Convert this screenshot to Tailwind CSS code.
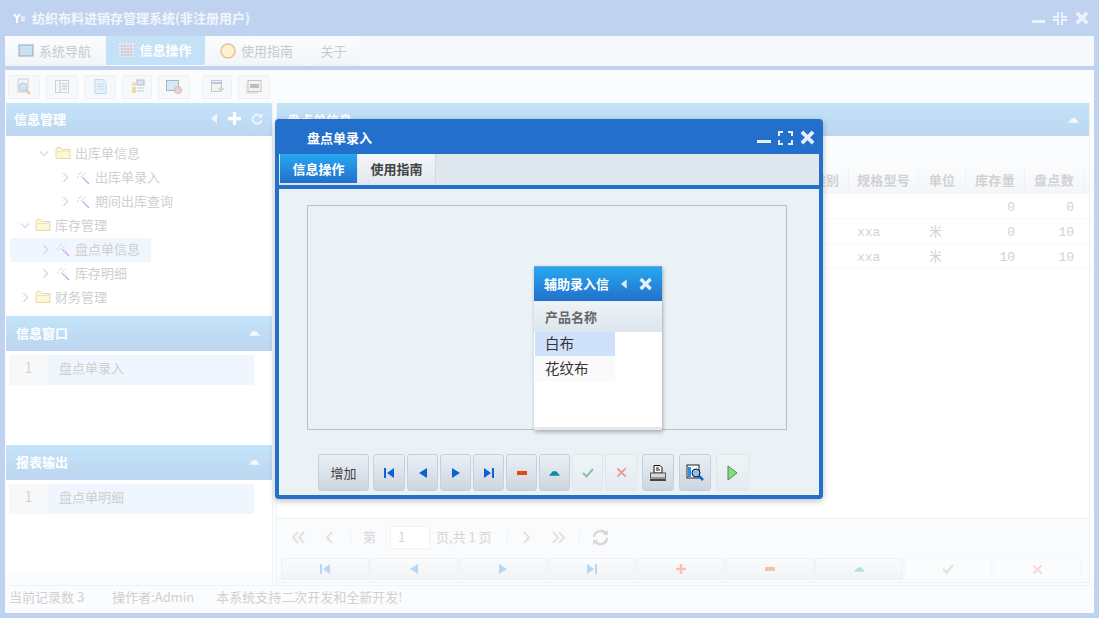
<!DOCTYPE html>
<html lang="zh-CN">
<head>
    <meta charset="UTF-8">
    <title>纺织布料进销存管理系统</title>
    <script src="https://cdn.jsdelivr.net/npm/@tailwindcss/browser@4"></script>
</head>
<body class="w-[1099px] h-[618px] overflow-hidden bg-[#bfd3f0] font-['Noto_Sans_CJK_SC','Liberation_Sans',sans-serif] text-[13px]">
<svg class="hidden">
    <symbol id="folder" viewBox="0 0 16 14"><path d="M1 3.5V12.5H15V3.5H7L5.5 1.5H2Z" fill="#fdf6d8" stroke="#e6d9a8"/><path d="M1.5 5.5H14.5" stroke="#efe6c0"/></symbol>
    <symbol id="wand" viewBox="0 0 16 16"><path d="M7 8L14 15" stroke="#d9a6ee" stroke-width="1.600"/><path d="M3 5L7 1M5 8L10 3M1 8L3 7M8 11L11 8" stroke="#dedede" stroke-width="1.500" stroke-dasharray="2 1"/></symbol>
    <symbol id="right" viewBox="0 0 8 12"><path d="M1.5 1L6.5 6L1.5 11" fill="none" stroke="#d4d4f0" stroke-width="1.5"/></symbol>
    <symbol id="down" viewBox="0 0 12 8"><path d="M1 1.5L6 6.5L11 1.5" fill="none" stroke="#d4d4f0" stroke-width="1.5"/></symbol>
    <symbol id="first" viewBox="0 0 12 10"><path d="M1 0H3V10H1ZM11 0V10L4 5Z"/></symbol>
    <symbol id="prev" viewBox="0 0 12 10"><path d="M10 0V10L2 5Z"/></symbol>
    <symbol id="next" viewBox="0 0 12 10"><path d="M2 0V10L10 5Z"/></symbol>
    <symbol id="last" viewBox="0 0 12 10"><path d="M9 0H11V10H9ZM1 0V10L8 5Z"/></symbol>
    <symbol id="caret" viewBox="0 0 12 6"><path d="M0 6L4 1H8L12 6Z"/></symbol>
    <symbol id="check" viewBox="0 0 12 10"><path d="M1 5L4.5 8.5L11 1" fill="none" stroke="currentColor" stroke-width="2"/></symbol>
    <symbol id="cross" viewBox="0 0 12 12"><path d="M1.5 1.5L10.5 10.5M10.5 1.5L1.5 10.5" fill="none" stroke="currentColor" stroke-width="2"/></symbol>
    <symbol id="xbold" viewBox="0 0 12 12"><path d="M1.5 1.5L10.5 10.5M10.5 1.5L1.5 10.5" fill="none" stroke="currentColor" stroke-width="3"/></symbol>
</svg>

<div class="flex flex-col h-full pl-[5px] pr-[5px] pb-[5px]">
    <!-- title bar -->
    <div class="h-[36px] shrink-0 flex items-center pl-[8px] pr-[5px] text-white">
        <svg class="w-[13px] h-[12px]" viewBox="0 0 13 12"><path d="M1 2L4 6L7 2M4 6V11" fill="none" stroke="#fff" stroke-width="2"/><rect x="8" y="4" width="4" height="6" fill="#dfe9f7"/></svg>
        <span class="ml-[6px] font-bold text-[13px] text-[#f2f6fc]">纺织布料进销存管理系统(非注册用户)</span>
        <div class="ml-auto flex items-center gap-[6px] text-[#eef3fb]">
            <svg class="w-[15px] h-[15px]" viewBox="0 0 15 15"><rect x="1" y="9" width="13" height="3" fill="currentColor"/></svg>
            <svg class="w-[16px] h-[15px]" viewBox="0 0 16 15"><path d="M6 1V6H1M10 1V6H15M6 14V9H1M10 14V9H15" fill="none" stroke="currentColor" stroke-width="2"/></svg>
            <svg class="w-[14px] h-[14px] ml-[1px]" viewBox="0 0 12 12"><use href="#xbold"/></svg>
        </div>
    </div>

    <div class="flex-1 min-h-0 flex flex-col bg-[#fbfcfe]">
        <!-- main tabs -->
        <div class="h-[30px] shrink-0 flex gap-[2px] bg-[#f5f9fc] text-[13px] text-[#c9c9c9]">
            <div class="w-[99px] pb-[1px] flex items-center justify-center gap-[5px] bg-gradient-to-b from-[#fbfdfe] to-[#f1f5f8]">
                <svg class="w-[16px] h-[13px]" viewBox="0 0 16 13"><rect x="1" y="1" width="14" height="11" fill="#c8e2f0" stroke="#9aa8b4"/></svg>系统导航
            </div>
            <div class="w-[99px] pb-[1px] flex items-center justify-center gap-[5px] bg-[#c4e1f7] text-white font-bold border-b border-[#f0f8fd]">
                <svg class="w-[15px] h-[14px]" viewBox="0 0 15 14"><path d="M0 0H15V14H0Z" fill="#eef2f6"/><path d="M3 0V14M6 0V14M9 0V14M12 0V14M0 3H15M0 6H15M0 9H15M0 12H15" stroke="#b8b8c4" stroke-width=".7"/></svg>信息操作
            </div>
            <div class="w-[99px] pb-[1px] flex items-center justify-center gap-[5px] bg-gradient-to-b from-[#fbfdfe] to-[#f1f5f8]">
                <svg class="w-[16px] h-[16px]" viewBox="0 0 16 16"><circle cx="8" cy="8" r="7" fill="#fdf1d2" stroke="#e0c690" stroke-width="1.4"/></svg>使用指南
            </div>
            <div class="w-[51px] pb-[1px] flex items-center justify-center bg-gradient-to-b from-[#fbfdfe] to-[#f1f5f8]">关于</div>
        </div>
        <div class="h-[4px] shrink-0 bg-[#bfd3f0]"></div>

        <!-- toolbar -->
        <div class="h-[33px] shrink-0 flex items-center pl-[3px] bg-[#fbfcfe]">
            <div class="w-[32px] h-[24px] flex items-center justify-center rounded-[2px] border border-[#eef0f2] bg-[#f7f8f9]"><svg class="w-[16px] h-[18px]" viewBox="0 0 16 18"><rect x="2" y="1" width="10" height="13" fill="#f4f4f4" stroke="#cfcfcf"/><circle cx="7" cy="9" r="4" fill="#cfe6f7" stroke="#b9c9d4"/><path d="M10 12L14 16" stroke="#eac3a6" stroke-width="2"/></svg></div>
            <div class="ml-[6px] w-[32px] h-[24px] flex items-center justify-center rounded-[2px] border border-[#eef0f2] bg-[#f7f8f9]"><svg class="w-[14px] h-[13px]" viewBox="0 0 14 13"><rect x=".5" y=".5" width="13" height="12" fill="#f4f6f7" stroke="#cdd2d6"/><path d="M5 1V12M7 4H12M7 6.500H12M7 9H12" stroke="#c4c9cd"/></svg></div>
            <div class="ml-[6px] w-[32px] h-[24px] flex items-center justify-center rounded-[2px] border border-[#eef0f2] bg-[#f7f8f9]"><svg class="w-[13px] h-[15px]" viewBox="0 0 13 15"><path d="M1 .5H9L12 3.500V14.500H1Z" fill="#e6f3fb" stroke="#bcdcf0"/><path d="M3 5H10M3 7.500H10M3 10H10" stroke="#bcdcf0"/></svg></div>
            <div class="ml-[6px] w-[30px] h-[24px] flex items-center justify-center rounded-[2px] border border-[#eef0f2] bg-[#f7f8f9]"><svg class="w-[15px] h-[15px]" viewBox="0 0 15 15"><circle cx="4" cy="5" r="2" fill="#f2dcb4"/><path d="M2 8H6V14H2Z" fill="#efd9a6"/><rect x="7" y="1" width="7" height="5" fill="#dbe3f0" stroke="#b8bccb"/><path d="M7 9H14M7 12H14" stroke="#c4c9cd"/></svg></div>
            <div class="ml-[6px] w-[32px] h-[24px] flex items-center justify-center rounded-[2px] border border-[#eef0f2] bg-[#f7f8f9]"><svg class="w-[16px] h-[14px]" viewBox="0 0 16 14"><rect x=".5" y=".5" width="12" height="10" fill="#d5e8f5" stroke="#aeb6bd"/><circle cx="12" cy="10" r="3.500" fill="#e7cfe2" stroke="#d2bfa0"/></svg></div>
            <div class="ml-[12px] w-[30px] h-[24px] flex items-center justify-center rounded-[2px] border border-[#eef0f2] bg-[#f7f8f9]"><svg class="w-[13px] h-[13px]" viewBox="0 0 13 13"><rect x=".5" y=".5" width="10" height="11" fill="#f2f3f4" stroke="#c6c9cc"/><path d="M1 3H10" stroke="#b4c7e0" stroke-width="2"/><path d="M7 9H13M10 6V12" stroke="#bfe0bd" stroke-width="1.500"/></svg></div>
            <div class="ml-[6px] w-[32px] h-[24px] flex items-center justify-center rounded-[2px] border border-[#eef0f2] bg-[#f7f8f9]"><svg class="w-[16px] h-[14px]" viewBox="0 0 16 14"><rect x="2" y=".5" width="13" height="11" fill="#f2f2f2" stroke="#c4c4c4"/><rect x="4" y="4" width="9" height="4" fill="#bdbdbd"/><path d="M0 3V13H12" fill="none" stroke="#cfcfcf"/></svg></div>
        </div>

        <div class="flex-1 min-h-0 flex pl-[1px] pr-[2px]">
            <!-- left panel -->
            <div class="w-[267px] shrink-0 flex flex-col border-r border-[#f0f3f6]">
                <div class="h-[33px] shrink-0 pb-[2px] flex items-center pl-[8px] pr-[9px] bg-gradient-to-b from-[#c2e4f9] to-[#bdd5f0] text-white font-bold">
                    信息管理
                    <div class="ml-auto flex items-center text-white">
                        <svg class="w-[6px] h-[11px] fill-[#eef5fc]" viewBox="0 0 6 10"><path d="M6 0V10L0 5Z"/></svg>
                        <svg class="ml-[11px] w-[13px] h-[13px]" viewBox="0 0 12 12"><path d="M6 0V12M0 6H12" stroke="#fff" stroke-width="3"/></svg>
                        <svg class="ml-[10px] w-[12px] h-[12px]" viewBox="0 0 12 12"><path d="M10 4A4.500 4.500 0 1 0 10.500 7.500" fill="none" stroke="#eef5fc" stroke-width="2"/><path d="M7.500 4.500H11.500V.5Z" fill="#eef5fc"/></svg>
                    </div>
                </div>
                <!-- tree -->
                <div class="h-[177px] shrink-0 pt-[6px] pl-[4px] bg-white text-[#cfcfcf] leading-[24px]">
                    <div class="h-[24px] pb-[2px] flex items-center pl-[29px]"><svg class="w-[10px] h-[7px]"><use href="#down"/></svg><svg class="ml-[6px] w-[16px] h-[14px]"><use href="#folder"/></svg><span class="ml-[4px]">出库单信息</span></div>
                    <div class="h-[24px] pb-[2px] flex items-center pl-[52px]"><svg class="w-[7px] h-[11px]"><use href="#right"/></svg><svg class="ml-[7px] w-[15px] h-[15px]"><use href="#wand"/></svg><span class="ml-[4px]">出库单录入</span></div>
                    <div class="h-[24px] pb-[2px] flex items-center pl-[52px]"><svg class="w-[7px] h-[11px]"><use href="#right"/></svg><svg class="ml-[7px] w-[15px] h-[15px]"><use href="#wand"/></svg><span class="ml-[4px]">期间出库查询</span></div>
                    <div class="h-[24px] pb-[2px] flex items-center pl-[10px]"><svg class="w-[10px] h-[7px]"><use href="#down"/></svg><svg class="ml-[5px] w-[16px] h-[14px]"><use href="#folder"/></svg><span class="ml-[4px]">库存管理</span></div>
                    <div class="h-[24px] pb-[2px] w-[141px] flex items-center pl-[32px] bg-[#f0f6fe]"><svg class="w-[7px] h-[11px]"><use href="#right"/></svg><svg class="ml-[7px] w-[15px] h-[15px]"><use href="#wand"/></svg><span class="ml-[4px]">盘点单信息</span></div>
                    <div class="h-[24px] pb-[2px] flex items-center pl-[32px]"><svg class="w-[7px] h-[11px]"><use href="#right"/></svg><svg class="ml-[7px] w-[15px] h-[15px]"><use href="#wand"/></svg><span class="ml-[4px]">库存明细</span></div>
                    <div class="h-[24px] pb-[2px] flex items-center pl-[12px]"><svg class="w-[7px] h-[11px]"><use href="#right"/></svg><svg class="ml-[6px] w-[16px] h-[14px]"><use href="#folder"/></svg><span class="ml-[4px]">财务管理</span></div>
                </div>
                <div class="h-[3px] shrink-0 bg-[#fbfcfe]"></div>
                <div class="h-[35px] shrink-0 pb-[2px] flex items-center pl-[10px] pr-[12px] bg-gradient-to-b from-[#c2e4f9] to-[#bdd5f0] text-white font-bold">
                    信息窗口
                    <svg class="ml-auto w-[11px] h-[6px] fill-[#f4f8fd]"><use href="#caret"/></svg>
                </div>
                <div class="h-[94px] shrink-0 pt-[4px] pl-[3px] bg-white">
                    <div class="w-[245px] h-[30px] flex items-center text-[#cfcfcf]">
                        <span class="w-[39px] h-full pb-[5px] flex items-center justify-center bg-[#f7f8fa] text-[#d4d4d4] text-[14px]">1</span>
                        <span class="flex-1 h-full pb-[5px] flex items-center pl-[11px] bg-[#f0f6fe]">盘点单录入</span>
                    </div>
                </div>
                <div class="h-[35px] shrink-0 pb-[2px] flex items-center pl-[10px] pr-[12px] bg-gradient-to-b from-[#c2e4f9] to-[#bdd5f0] text-white font-bold">
                    报表输出
                    <svg class="ml-auto w-[11px] h-[6px] fill-[#f4f8fd]"><use href="#caret"/></svg>
                </div>
                <div class="h-[90px] shrink-0 pt-[4px] pl-[3px] bg-white">
                    <div class="w-[245px] h-[30px] flex items-center text-[#cfcfcf]">
                        <span class="w-[39px] h-full pb-[5px] flex items-center justify-center bg-[#f7f8fa] text-[#d4d4d4] text-[14px]">1</span>
                        <span class="flex-1 h-full pb-[5px] flex items-center pl-[11px] bg-[#f0f6fe]">盘点单明细</span>
                    </div>
                </div>
            </div>

            <!-- right panel -->
            <div class="ml-[3px] w-[814px] flex flex-col border-x border-[#f0f3f6]">
                <div class="h-[33px] shrink-0 flex items-center pl-[10px] pr-[10px] bg-gradient-to-b from-[#c2e4f9] to-[#bdd5f0] text-white font-bold">
                    盘点单信息
                    <svg class="ml-auto w-[11px] h-[6px] fill-[#f4f8fd]"><use href="#caret"/></svg>
                </div>
                <div class="h-[29px] shrink-0 bg-[#fbfcfe]"></div>
                <!-- table -->
                <div class="h-[353px] shrink-0 bg-white">
                    <div class="h-[29px] flex justify-end items-center bg-gradient-to-b from-[#fbfcfd] to-[#f3f6f9] font-bold text-[#d2d2d2]">
                        <span class="w-[40px] pr-[9px] text-right">类别</span>
                        <span class="w-[70px] h-full flex items-center justify-center border-l border-[#f0f3f6] tracking-[0.3px]">规格型号</span>
                        <span class="w-[47px] h-full flex items-center justify-center border-l border-[#f0f3f6] tracking-[0.3px]">单位</span>
                        <span class="w-[59px] h-full flex items-center justify-center border-l border-[#f0f3f6] tracking-[0.3px]">库存量</span>
                        <span class="w-[59px] h-full flex items-center justify-center border-l border-[#f0f3f6] tracking-[0.3px]">盘点数</span>
                        <span class="w-[6px] h-full border-l border-[#f0f3f6]"></span>
                    </div>
                    <div class="h-[25px] pt-[4px] flex justify-end items-center border-b border-[#f8f9fb] font-['Liberation_Mono',monospace] text-[#d2d2d2]">
                        <span class="w-[70px] pl-[12px]"></span><span class="w-[47px] pr-[6px] text-center"></span>
                        <span class="w-[59px] pr-[6px] text-right">0</span><span class="w-[59px] pr-[6px] text-right">0</span><span class="w-[9px]"></span>
                    </div>
                    <div class="h-[25px] pt-[4px] flex justify-end items-center border-b border-[#f8f9fb] font-['Liberation_Mono',monospace] text-[#d2d2d2]">
                        <span class="w-[70px] pl-[12px]">xxa</span><span class="w-[47px] pr-[6px] text-center">米</span>
                        <span class="w-[59px] pr-[6px] text-right">0</span><span class="w-[59px] pr-[6px] text-right">10</span><span class="w-[9px]"></span>
                    </div>
                    <div class="h-[25px] pt-[4px] flex justify-end items-center border-b border-[#f8f9fb] font-['Liberation_Mono',monospace] text-[#d2d2d2]">
                        <span class="w-[70px] pl-[12px]">xxa</span><span class="w-[47px] pr-[6px] text-center">米</span>
                        <span class="w-[59px] pr-[6px] text-right">10</span><span class="w-[59px] pr-[6px] text-right">10</span><span class="w-[9px]"></span>
                    </div>
                </div>
                <!-- pager -->
                <div class="h-[37px] shrink-0 flex items-center pl-[14px] border-t border-[#f0f3f6] bg-[#fafbfd] text-[#d6d6d6]">
                    <svg class="w-[14px] h-[13px]" viewBox="0 0 14 13"><path d="M7 1L2 6.500L7 12M13 1L8 6.500L13 12" fill="none" stroke="#e2e2e2" stroke-width="2"/></svg>
                    <svg class="ml-[20px] w-[8px] h-[13px]" viewBox="0 0 8 13"><path d="M7 1L2 6.500L7 12" fill="none" stroke="#e2e2e2" stroke-width="2"/></svg>
                    <div class="ml-[17px] w-[1px] h-[14px] bg-[#eef0f3]"></div>
                    <span class="ml-[12px]">第</span>
                    <span class="ml-[14px] w-[40px] h-[23px] flex items-center pl-[7px] bg-white border border-[#f2f3f5]">1</span>
                    <span class="ml-[6px]">页,共 1 页</span>
                    <div class="ml-[15px] w-[1px] h-[14px] bg-[#eef0f3]"></div>
                    <svg class="ml-[15px] w-[8px] h-[13px]" viewBox="0 0 8 13"><path d="M1 1L6 6.500L1 12" fill="none" stroke="#e2e2e2" stroke-width="2"/></svg>
                    <svg class="ml-[21px] w-[14px] h-[13px]" viewBox="0 0 14 13"><path d="M1 1L6 6.500L1 12M7 1L12 6.500L7 12" fill="none" stroke="#e2e2e2" stroke-width="2"/></svg>
                    <div class="ml-[13px] w-[1px] h-[14px] bg-[#eef0f3]"></div>
                    <svg class="ml-[12px] w-[17px] h-[17px]" viewBox="0 0 17 17"><path d="M2 8A6.500 6.500 0 0 1 14 5M15 9A6.500 6.500 0 0 1 3 12" fill="none" stroke="#d8d8d8" stroke-width="2.500"/><path d="M11 6H16V1ZM6 11H1V16Z" fill="#d8d8d8"/></svg>
                </div>
                <!-- bottom buttons -->
                <div class="h-[28px] shrink-0 flex gap-[1px] pl-[4px] pt-[3px] bg-[#fafbfd] border-b border-[#f0f3f6]">
                    <div class="w-[88px] h-[22px] flex items-center justify-center rounded-[2px] border border-[#eef0f4] bg-gradient-to-b from-[#fafbfc] to-[#f1f3f6] fill-[#b8d6f5]"><svg class="w-[12px] h-[10px]"><use href="#first"/></svg></div>
                    <div class="w-[88px] h-[22px] flex items-center justify-center rounded-[2px] border border-[#eef0f4] bg-gradient-to-b from-[#fafbfc] to-[#f1f3f6] fill-[#b8d6f5]"><svg class="w-[12px] h-[10px]"><use href="#prev"/></svg></div>
                    <div class="w-[88px] h-[22px] flex items-center justify-center rounded-[2px] border border-[#eef0f4] bg-gradient-to-b from-[#fafbfc] to-[#f1f3f6] fill-[#b8d6f5]"><svg class="w-[12px] h-[10px]"><use href="#next"/></svg></div>
                    <div class="w-[88px] h-[22px] flex items-center justify-center rounded-[2px] border border-[#eef0f4] bg-gradient-to-b from-[#fafbfc] to-[#f1f3f6] fill-[#b8d6f5]"><svg class="w-[12px] h-[10px]"><use href="#last"/></svg></div>
                    <div class="w-[88px] h-[22px] flex items-center justify-center rounded-[2px] border border-[#eef0f4] bg-gradient-to-b from-[#fafbfc] to-[#f1f3f6]"><svg class="w-[10px] h-[10px]" viewBox="0 0 10 10"><path d="M5 0V10M0 5H10" stroke="#f6c2a8" stroke-width="2.500"/></svg></div>
                    <div class="w-[88px] h-[22px] flex items-center justify-center rounded-[2px] border border-[#eef0f4] bg-gradient-to-b from-[#fafbfc] to-[#f1f3f6]"><svg class="w-[10px] h-[4px]" viewBox="0 0 10 4"><path d="M0 0H10V4H0Z" fill="#f6c2a8"/></svg></div>
                    <div class="w-[88px] h-[22px] flex items-center justify-center rounded-[2px] border border-[#eef0f4] bg-gradient-to-b from-[#fafbfc] to-[#f1f3f6] fill-[#b3e0e8]"><svg class="w-[11px] h-[6px]"><use href="#caret"/></svg></div>
                    <div class="w-[88px] h-[22px] flex items-center justify-center rounded-[2px] border border-[#f5f6f8] bg-[#fbfcfd] text-[#d2e8d8]"><svg class="w-[12px] h-[10px]"><use href="#check"/></svg></div>
                    <div class="w-[88px] h-[22px] flex items-center justify-center rounded-[2px] border border-[#f5f6f8] bg-[#fbfcfd] text-[#f6d6d6]"><svg class="w-[11px] h-[11px]"><use href="#cross"/></svg></div>
                </div>
            </div>
        </div>

        <!-- status bar -->
        <div class="h-[28px] shrink-0 pb-[6px] flex items-center pl-[4px] text-[#d0d0d0] border-t border-[#f0f3f6] bg-[#fbfcfe]">
            <span>当前记录数 3</span><span class="ml-[28px]">操作者:Admin</span><span class="ml-[22px]">本系统支持二次开发和全新开发!</span>
        </div>
    </div>
</div>

<!-- 盘点单录入 window -->
<div class="absolute left-[275px] top-[119px] w-[548px] h-[380px] flex flex-col rounded-[4px] bg-[#236fcc] shadow-[0_2px_6px_rgba(0,0,0,0.25)] px-[4px] pb-[4px]">
    <div class="h-[35px] shrink-0 flex items-center pl-[28px] pr-[4px] pt-[2px] text-white font-bold">
        盘点单录入
        <div class="ml-auto flex items-center gap-[7px] text-[#e6eefa]">
            <svg class="w-[14px] h-[14px]" viewBox="0 0 14 14"><rect y="9" width="14" height="3" fill="currentColor"/></svg>
            <svg class="w-[15px] h-[14px]" viewBox="0 0 15 14"><path d="M1 5V1H5M10 1H14V5M14 9V13H10M5 13H1V9" fill="none" stroke="currentColor" stroke-width="2"/></svg>
            <svg class="w-[15px] h-[15px]" viewBox="0 0 12 12"><use href="#xbold"/></svg>
        </div>
    </div>
    <div class="h-[31px] shrink-0 flex bg-[#dfe8ef] pl-[1px]">
        <div class="w-[77px] h-[29px] flex items-center justify-center bg-gradient-to-b from-[#27a8f0] to-[#2270cb] text-white font-bold">信息操作</div>
        <div class="ml-[1px] w-[78px] h-[29px] flex items-center justify-center bg-gradient-to-b from-[#f4f7f9] to-[#e2e8ee] border-r border-[#cfd8e0] text-[#444] font-bold">使用指南</div>
    </div>
    <div class="h-[4px] shrink-0 bg-[#236fcc]"></div>
    <div class="flex-1 min-h-0 flex flex-col bg-[#ebf2f6] pl-[28px] pt-[16px]">
        <div class="w-[480px] h-[225px] shrink-0 border border-[#bcc0c4]"></div>
        <div class="mt-[24px] pl-[11px] flex gap-[2px]">
            <div class="w-[51px] h-[37px] flex items-center justify-center rounded-[3px] border border-[#c6d0dc] bg-gradient-to-b from-[#ebf0f5] to-[#cdd5e0] text-[#444]">增加</div>
            <div class="ml-[2px] w-[32px] h-[37px] flex items-center justify-center rounded-[3px] border border-[#c6d0dc] bg-gradient-to-b from-[#ebf0f5] to-[#cdd5e0] fill-[#0a64d0]"><svg class="w-[12px] h-[10px]"><use href="#first"/></svg></div>
            <div class="w-[31px] h-[37px] flex items-center justify-center rounded-[3px] border border-[#c6d0dc] bg-gradient-to-b from-[#ebf0f5] to-[#cdd5e0] fill-[#0a64d0]"><svg class="w-[12px] h-[10px]"><use href="#prev"/></svg></div>
            <div class="w-[31px] h-[37px] flex items-center justify-center rounded-[3px] border border-[#c6d0dc] bg-gradient-to-b from-[#ebf0f5] to-[#cdd5e0] fill-[#0a64d0]"><svg class="w-[12px] h-[10px]"><use href="#next"/></svg></div>
            <div class="w-[31px] h-[37px] flex items-center justify-center rounded-[3px] border border-[#c6d0dc] bg-gradient-to-b from-[#ebf0f5] to-[#cdd5e0] fill-[#0a64d0]"><svg class="w-[12px] h-[10px]"><use href="#last"/></svg></div>
            <div class="w-[31px] h-[37px] flex items-center justify-center rounded-[3px] border border-[#c6d0dc] bg-gradient-to-b from-[#ebf0f5] to-[#cdd5e0]"><svg class="w-[10px] h-[4px]" viewBox="0 0 10 4"><path d="M0 0H10V4H0Z" fill="#e04a10"/></svg></div>
            <div class="w-[31px] h-[37px] flex items-center justify-center rounded-[3px] border border-[#c6d0dc] bg-gradient-to-b from-[#ebf0f5] to-[#cdd5e0] fill-[#0a8fa0]"><svg class="w-[11px] h-[6px]"><use href="#caret"/></svg></div>
            <div class="w-[31px] h-[37px] flex items-center justify-center rounded-[3px] border border-[#dfe6ec] bg-gradient-to-b from-[#eff4f7] to-[#e4ebf0] text-[#8fbfa4]"><svg class="w-[12px] h-[10px]"><use href="#check"/></svg></div>
            <div class="w-[32px] h-[37px] flex items-center justify-center rounded-[3px] border border-[#dfe6ec] bg-gradient-to-b from-[#eff4f7] to-[#e4ebf0] text-[#e89a9a]"><svg class="w-[11px] h-[11px]"><use href="#cross"/></svg></div>
            <div class="ml-[3px] w-[32px] h-[37px] flex items-center justify-center rounded-[3px] border border-[#c6d0dc] bg-gradient-to-b from-[#ebf0f5] to-[#cdd5e0]"><svg class="w-[16px] h-[16px]" viewBox="0 0 16 16"><path d="M4 .5H10L12 2.500V8H4Z" fill="#fff" stroke="#111"/><path d="M6 3H9M6 5H10" stroke="#111"/><rect x=".5" y="8" width="15" height="5" fill="#d8d8d8" stroke="#555"/><path d="M0 15H16" stroke="#111" stroke-width="1.500"/></svg></div>
            <div class="ml-[3px] w-[32px] h-[37px] flex items-center justify-center rounded-[3px] border border-[#c6d0dc] bg-gradient-to-b from-[#ebf0f5] to-[#cdd5e0]"><svg class="w-[18px] h-[18px]" viewBox="0 0 18 18"><rect x="1" y="1" width="12" height="13" fill="#fff" stroke="#222"/><rect x="2" y="3" width="3" height="10" fill="#2c8fe0"/><circle cx="10" cy="9" r="4" fill="#7fc4f5" stroke="#111"/><path d="M13 12L17 16" stroke="#0a64d0" stroke-width="2.500"/></svg></div>
            <div class="ml-[3px] w-[33px] h-[37px] flex items-center justify-center rounded-[3px] border border-[#dfe6ec] bg-gradient-to-b from-[#eff4f7] to-[#e4ebf0]"><svg class="w-[11px] h-[16px]" viewBox="0 0 11 16"><path d="M1 1V15L10 8Z" fill="#6fe87a" stroke="#6a7a6a"/></svg></div>
        </div>
    </div>
</div>

<!-- 辅助录入信息 window -->
<div class="absolute left-[534px] top-[266px] w-[128px] h-[164px] flex flex-col overflow-hidden bg-white border-t border-[#6fa8e6] shadow-[1px_2px_4px_rgba(0,0,0,0.3)]">
    <div class="h-[34px] shrink-0 flex items-center pl-[10px] pr-[10px] bg-gradient-to-b from-[#27a8f0] to-[#2270cb] text-white font-bold">
        <span class="w-[65px] whitespace-nowrap">辅助录入信</span>
        <svg class="ml-[12px] w-[6px] h-[10px] fill-[#dce9f8]" viewBox="0 0 6 10"><path d="M6 0V10L0 5Z"/></svg>
        <svg class="ml-[12px] w-[14px] h-[14px] text-[#e6eefa]" viewBox="0 0 12 12"><use href="#xbold"/></svg>
    </div>
    <div class="h-[31px] shrink-0 flex items-center pl-[11px] bg-gradient-to-b from-[#eef3f7] to-[#dce6ed] font-bold text-[#666]">产品名称</div>
    <div class="h-[24px] pb-[2px] ml-[1px] w-[80px] shrink-0 flex items-center pl-[10px] bg-[#cfe0fa] text-[14.5px] text-[#333]">白布</div>
    <div class="h-[25px] pb-[2px] ml-[1px] w-[80px] shrink-0 flex items-center pl-[10px] bg-[#fafafa] text-[14.5px] text-[#333]">花纹布</div>
    <div class="mt-auto h-[3px] shrink-0 bg-[#e4e9ed]"></div>
</div>
</body>
</html>
